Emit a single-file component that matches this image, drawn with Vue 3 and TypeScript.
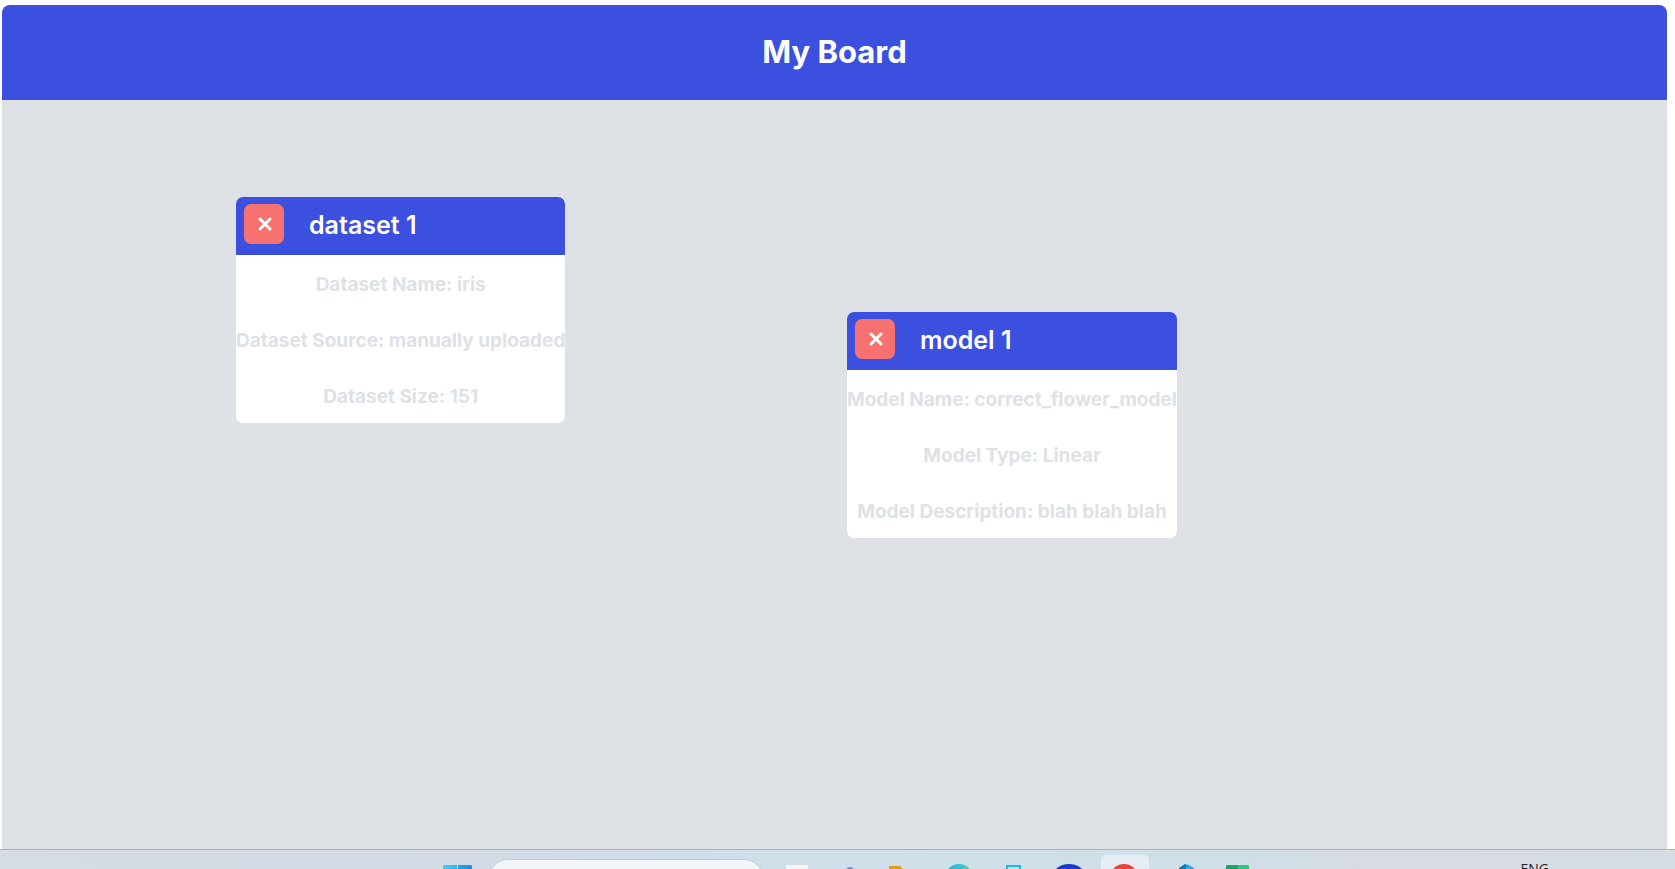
<script setup lang="ts">
import { ref } from 'vue'

interface BoardNode {
  id: string
  title: string
  x: number
  y: number
  lines: string[]
}

const nodes = ref<BoardNode[]>([
  {
    id: 'dataset-1',
    title: 'dataset 1',
    x: 234,
    y: 97,
    lines: ['Dataset Name: iris', 'Dataset Source: manually uploaded', 'Dataset Size: 151'],
  },
  {
    id: 'model-1',
    title: 'model 1',
    x: 845,
    y: 212,
    lines: ['Model Name: correct_flower_model', 'Model Type: Linear', 'Model Description: blah blah blah'],
  },
])

function removeNode(id: string) {
  nodes.value = nodes.value.filter((node) => node.id !== id)
}
</script>

<template>
  <div class="screen">
    <main class="board">
      <header class="board-header">
        <h1>My Board</h1>
      </header>
      <section class="canvas">
        <article
          v-for="node in nodes"
          :key="node.id"
          class="node"
          :style="{ left: node.x + 'px', top: node.y + 'px' }"
        >
          <header class="node-header">
            <button class="close" type="button" :aria-label="'Remove ' + node.title" @click="removeNode(node.id)">
              <svg width="16" height="16" viewBox="0 0 16 16" aria-hidden="true">
                <path d="M3 3L13 13M13 3L3 13" fill="none" stroke="#fff" stroke-width="3" stroke-linecap="round" />
              </svg>
            </button>
            <h2>{{ node.title }}</h2>
          </header>
          <div class="details">
            <p v-for="line in node.lines" :key="line">{{ line }}</p>
          </div>
        </article>
      </section>
    </main>

    <footer class="taskbar">
      <nav class="apps" aria-label="Taskbar">
        <button type="button" aria-label="Start">
          <svg viewBox="0 0 48 48">
            <defs>
              <linearGradient id="start-a"><stop stop-color="#45c8fa" /><stop offset="1" stop-color="#38b6f1" /></linearGradient>
              <linearGradient id="start-b"><stop stop-color="#2ba4e9" /><stop offset="1" stop-color="#1990e3" /></linearGradient>
            </defs>
            <path d="M11 10h13v14H10V11z" fill="url(#start-a)" />
            <path d="M25 10h13l1 1v13H25z" fill="url(#start-b)" />
          </svg>
        </button>
        <input class="search" type="search" aria-label="Search" />
        <button type="button" aria-label="Task view">
          <svg viewBox="0 0 48 48"><rect x="15" y="10" width="22" height="22" rx="1" fill="#f5f5f5" /></svg>
        </button>
        <button type="button" aria-label="Chat">
          <svg viewBox="0 0 48 48"><circle cx="24" cy="16" r="4" fill="#7b83eb" /></svg>
        </button>
        <button type="button" aria-label="File Explorer">
          <svg viewBox="0 0 48 48"><path d="M8 12q0-1 1-1h9q1 0 2 1l3 3v10H8z" fill="#e2a10c" /></svg>
        </button>
        <button type="button" aria-label="Edge">
          <svg viewBox="0 0 48 48">
            <defs>
              <linearGradient id="edge"><stop stop-color="#2ab5e5" /><stop offset="0.6" stop-color="#31c6cf" /><stop offset="1" stop-color="#66d675" /></linearGradient>
            </defs>
            <circle cx="23" cy="23" r="14" fill="url(#edge)" />
          </svg>
        </button>
        <button type="button" aria-label="Phone">
          <svg viewBox="0 0 48 48"><rect x="16" y="11" width="13" height="26" fill="none" stroke="#16b4f8" stroke-width="2" /></svg>
        </button>
        <button type="button" aria-label="Browser">
          <svg viewBox="0 0 48 48"><ellipse cx="23" cy="19" rx="15" ry="10" fill="#173ac8" /></svg>
        </button>
        <button class="active" type="button" aria-label="Chrome">
          <svg viewBox="0 0 48 48"><circle cx="23" cy="23" r="14" fill="#e94435" /></svg>
        </button>
        <button type="button" aria-label="Visual Studio Code">
          <svg viewBox="0 0 48 48">
            <path d="M23 13l6-4 2 1v14h-9z" fill="#0877b9" />
            <path d="M31 9l7 4v11h-9v-8z" fill="#28a9eb" />
          </svg>
        </button>
        <button type="button" aria-label="Excel">
          <svg viewBox="0 0 48 48">
            <path d="M15 11l1-1h11v14H15z" fill="#21a366" />
            <path d="M27 10h10l1 1v13H27z" fill="#33c481" />
          </svg>
        </button>
      </nav>
      <span class="language">ENG</span>
    </footer>
  </div>
</template>

<style>
body {
  margin: 0;
  background: #fff;
}
</style>

<style scoped>
.screen {
  display: flex;
  flex-direction: column;
  height: 100vh;
  overflow: hidden;
  font-family: Inter, sans-serif;
}

.board {
  flex: 1;
  display: flex;
  flex-direction: column;
  min-height: 0;
  margin: 5px 8px 0 2px;
  border-radius: 8px 8px 0 0;
  overflow: hidden;
  background: #dee2e6;
}

.board-header {
  padding: 27px 0 29px;
  background: #3b50df;
  color: #fff;
  text-align: center;
}

h1 {
  margin: 0;
  font-size: 31px;
  font-weight: 700;
  line-height: 39px;
}

.canvas {
  position: relative;
  flex: 1;
}

.node {
  position: absolute;
  border-radius: 7px;
  overflow: hidden;
  background: #fff;
}

.node-header {
  display: flex;
  gap: 25px;
  padding: 7px 8px 9px;
  background: #3b50df;
  color: #fff;
}

h2 {
  margin: 0;
  font-size: 25px;
  font-weight: 600;
  line-height: 42px;
}

.close {
  display: flex;
  align-items: center;
  justify-content: center;
  width: 40px;
  height: 40px;
  padding: 0 0 0 2px;
  border: 0;
  border-radius: 7px;
  background: #f87171;
  cursor: pointer;
}

.details {
  display: flex;
  flex-direction: column;
  gap: 26px;
  padding: 15px 0 11px;
}

.details p {
  margin: 0;
  color: #dee2e6;
  font-size: 19px;
  font-weight: 700;
  line-height: 30px;
  text-align: center;
  white-space: nowrap;
}

.taskbar {
  display: grid;
  grid-template-columns: 51fr auto 49fr;
  flex: none;
  box-sizing: border-box;
  height: 20px;
  overflow: hidden;
  border-top: 1px solid #a9b0b6;
  background: linear-gradient(90deg, #d3dde3 0%, #d4dae3 20%, #cfe0eb 50%, #cfdfe7 74%, #d8dbe2 82%, #d4dce4 100%);
}

.apps {
  grid-column: 2;
  display: flex;
  gap: 7px;
  padding-top: 5px;
}

.apps button {
  flex: none;
  width: 48px;
  height: 48px;
  padding: 0;
  border: 0;
  border-radius: 5px;
  background: transparent;
}

.apps button.active {
  background: #e6edf5;
}

.apps svg {
  display: block;
  width: 48px;
  height: 48px;
}

.search {
  box-sizing: border-box;
  width: 276px;
  height: 40px;
  margin: 4px 0 0;
  padding: 0 20px;
  border: 1px solid #bdcddb;
  border-radius: 20px;
  background: #f1f5f9;
}

.language {
  padding: 9px 126px 0 0;
  color: #1d2226;
  font-family: "Open Sans", sans-serif;
  font-size: 14px;
  line-height: 20px;
  text-align: right;
}
</style>
